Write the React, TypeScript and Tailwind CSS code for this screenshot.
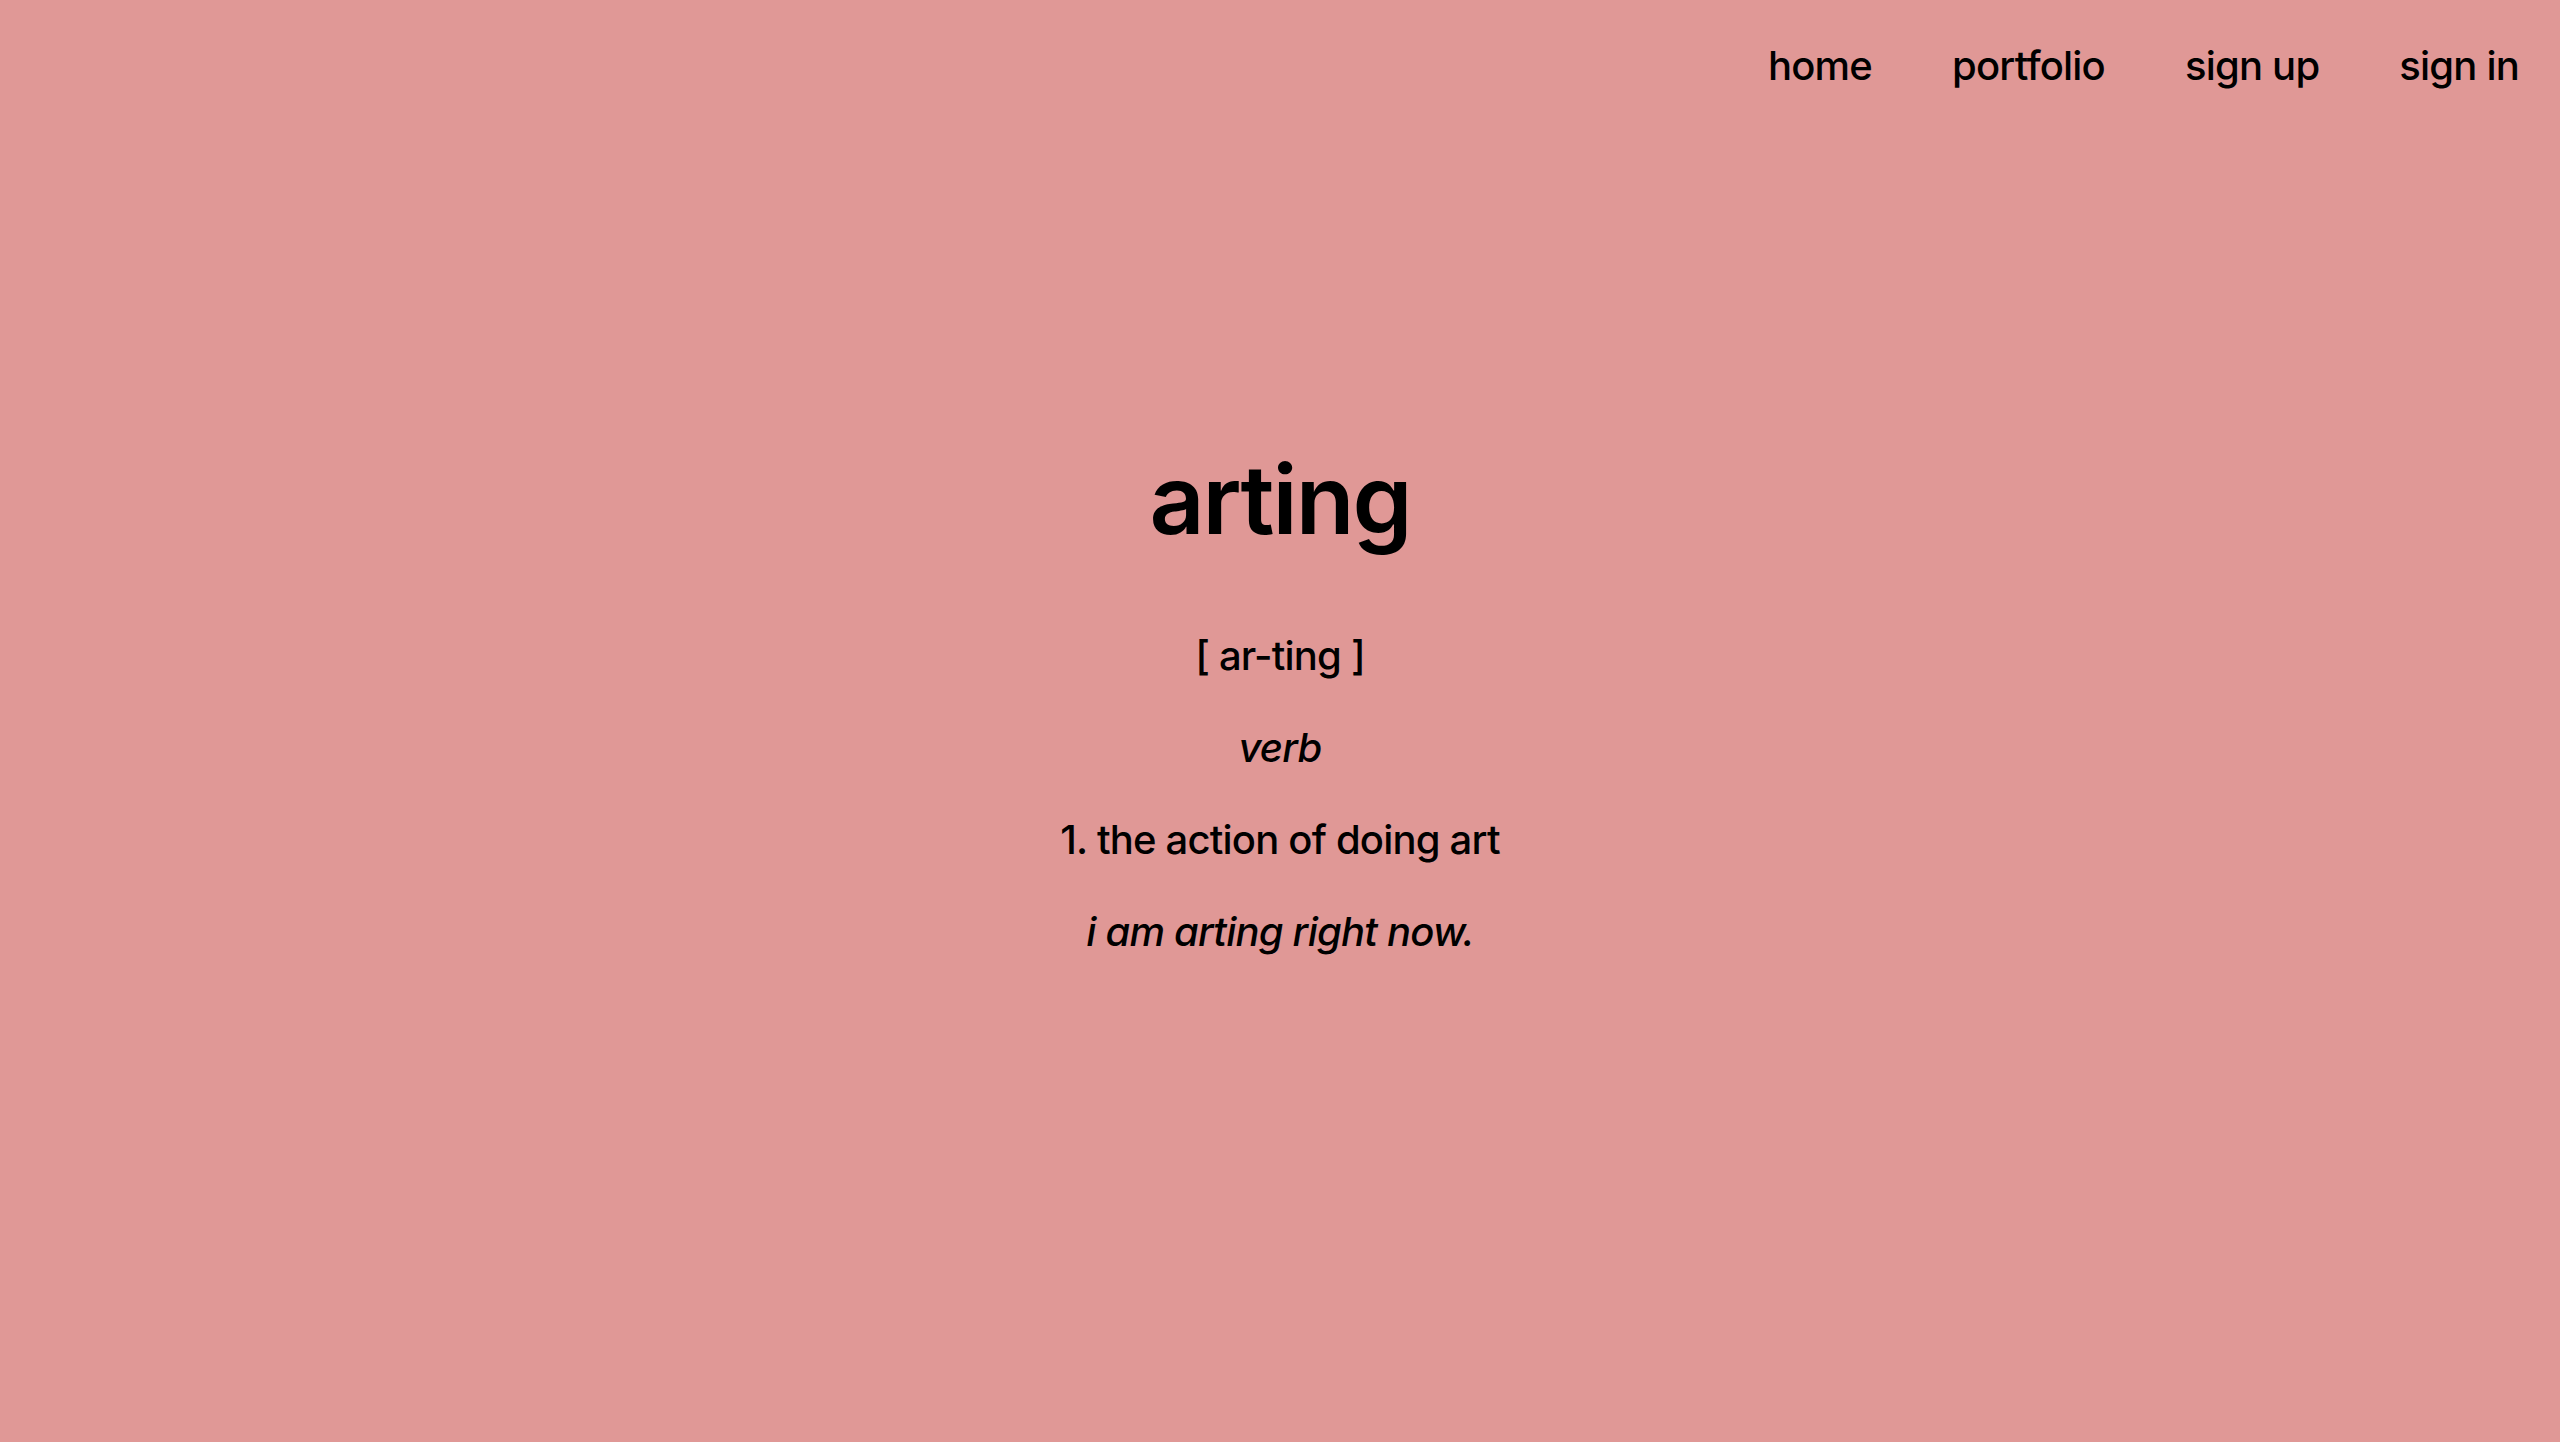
export default function App() {
  const links = ["home", "portfolio", "sign up", "sign in"];
  return (
    <div
      className="min-h-[1442px] w-full bg-[#e09896] text-black"
      style={{ fontFamily: "Inter, 'Noto Sans', sans-serif" }}
    >
      <nav className="flex justify-end gap-[80px] pr-[41px] pt-[40px]">
        {links.map((l) => (
          <a key={l} href="#" className="text-[40px] font-medium leading-[52px] tracking-[-0.02em] text-black no-underline">
            {l}
          </a>
        ))}
      </nav>
      <main className="flex flex-col items-center pt-[360px] text-center">
        <h1 className="text-[96px] leading-[94px] font-semibold tracking-[-0.02em]">arting</h1>
        <div className="mt-[84px] flex flex-col items-center gap-[40px] text-[40px] font-medium leading-[52px] tracking-[-0.02em]">
          <p>[ ar-ting ]</p>
          <p className="italic">verb</p>
          <p>1. the action of doing art</p>
          <p className="italic">i am arting right now.</p>
        </div>
      </main>
    </div>
  );
}
